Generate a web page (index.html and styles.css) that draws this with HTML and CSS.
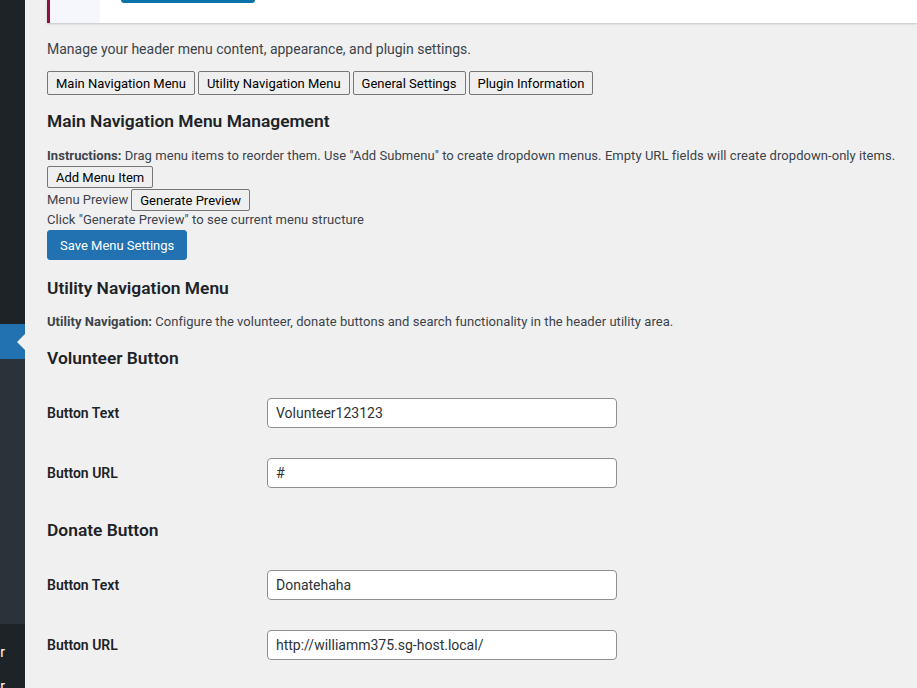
FILE: index.html
```html
<!DOCTYPE html>
<html lang="en">
<head>
<meta charset="utf-8">
<title>Header Menu Settings</title>
<link rel="stylesheet" href="styles.css">
</head>
<body>
<div class="layout">
  <aside class="sidebar">
    <div class="sb-top"></div>
    <div class="sb-active"></div>
    <div class="sb-sub"></div>
    <div class="sb-rest">
      <div class="sb-item"><span>Header</span></div>
      <div class="sb-item"><span>Editor</span></div>
    </div>
  </aside>
  <main class="content">
    <div class="notice-panel">
      <div class="notice-side"></div>
      <div class="notice-body"><span class="notice-btn"></span></div>
    </div>
    <p class="desc">Manage your header menu content, appearance, and plugin settings.</p>
    <div class="tabs">
      <button class="btn">Main Navigation Menu</button>
      <button class="btn">Utility Navigation Menu</button>
      <button class="btn">General Settings</button>
      <button class="btn">Plugin Information</button>
    </div>
    <h2 class="heading">Main Navigation Menu Management</h2>
    <p class="line"><strong>Instructions:</strong> Drag menu items to reorder them. Use "Add Submenu" to create dropdown menus. Empty URL fields will create dropdown-only items.</p>
    <div class="btn-row"><button class="btn small">Add Menu Item</button></div>
    <div class="btn-row preview-row"><span>Menu Preview</span><button class="btn small">Generate Preview</button></div>
    <p class="line">Click "Generate Preview" to see current menu structure</p>
    <button class="btn-primary">Save Menu Settings</button>
    <h2 class="heading h-utility">Utility Navigation Menu</h2>
    <p class="line"><strong>Utility Navigation:</strong> Configure the volunteer, donate buttons and search functionality in the header utility area.</p>
    <h3 class="heading sub">Volunteer Button</h3>
    <table class="form-table">
      <tr><th>Button Text</th><td><input class="field" type="text" value="Volunteer123123"></td></tr>
      <tr><th>Button URL</th><td><input class="field" type="text" value="#"></td></tr>
    </table>
    <h3 class="heading sub">Donate Button</h3>
    <table class="form-table">
      <tr><th>Button Text</th><td><input class="field" type="text" value="Donatehaha"></td></tr>
      <tr><th>Button URL</th><td><input class="field" type="text" value="http://williamm375.sg-host.local/"></td></tr>
    </table>
  </main>
</div>
</body>
</html>
```
FILE: styles.css
```css
* { box-sizing: border-box; }
html, body { margin: 0; padding: 0; height: 100%; overflow: hidden; }
body {
  background: #f0f0f1;
  color: #3c434a;
  font-family: Roboto, "Open Sans", sans-serif;
  font-size: 13px;
  line-height: 18px;
}
.layout { display: flex; height: 688px; }
.sidebar { width: 25px; flex: none; display: flex; flex-direction: column; overflow: hidden; }
.sb-top { flex: none; height: 324px; background: #1d2327; }
.sb-active { flex: none; height: 35px; background: #2271b1; position: relative; }
.sb-active::after {
  content: ""; position: absolute; right: 0; top: 10px;
  border-top: 8px solid transparent; border-bottom: 8px solid transparent;
  border-right: 8px solid #f0f0f1;
}
.sb-sub { flex: none; height: 265px; background: #2c3338; }
.sb-rest { flex: 1; min-height: 0; overflow: hidden; background: #1d2327; padding-top: 11px; }
.sb-item {
  display: flex; justify-content: flex-end; padding-right: 20px;
  overflow: hidden; height: 34px; color: #fff; font-size: 14px; line-height: 34px;
  white-space: nowrap;
}
.content { flex: 1; padding: 0 20px 0 22px; min-width: 0; }
.notice-panel {
  display: flex; height: 23px; background: #fff;
  border-left: 3px solid #950b46;
  box-shadow: 0 1px 2px rgba(0,0,0,.18);
  margin-right: -20px;
}
.notice-side { width: 50px; background: #f6f7fc; }
.notice-body { flex: 1; padding-left: 21px; }
.notice-btn {
  display: block; width: 134px; height: 3px; background: #0a73aa;
  border-radius: 0 0 4px 4px;
}
.desc { margin: 17px 0 13px; font-size: 14px; }
.tabs { display: flex; gap: 3px; }
.btn {
  font-family: inherit; font-size: 13px; color: #000;
  background: #efefef; border: 1px solid #767676; border-radius: 2px;
  padding: 1px 8px 0; height: 24px; line-height: 20px;
}
.btn.small { height: 22px; line-height: 18px; }
.heading { color: #1d2327; font-size: 17.4px; font-weight: 600; line-height: 24px; margin: 14px 0 14px; }
.line { margin: 0; letter-spacing: 0.05px; }
.btn-row { display: flex; align-items: center; margin-top: 1px; }
.preview-row { margin-top: 1px; gap: 3px; }
.btn-primary {
  display: block; margin-top: 1px;
  font-family: inherit; font-size: 13px; color: #fff;
  background: #2271b1; border: 1px solid #2271b1; border-radius: 3px;
  height: 30px; padding: 0 12px;
}
.h-utility { margin-top: 16px; margin-bottom: 13px; }
.sub { margin-top: 15px; margin-bottom: 13px; }
.form-table { border-collapse: collapse; width: 100%; margin-bottom: 4px; }
.form-table th {
  width: 210px; text-align: left; vertical-align: top;
  padding: 20px 10px 20px 0; font-size: 14px; font-weight: 600; color: #1d2327; line-height: 20px;
}
.form-table td { padding: 15px 10px; vertical-align: top; }
.field {
  width: 350px; height: 30px; border: 1px solid #8c8f94; border-radius: 4px;
  background: #fff; padding: 0 8px; font-family: inherit; font-size: 14px; color: #2c3338;
}
```
